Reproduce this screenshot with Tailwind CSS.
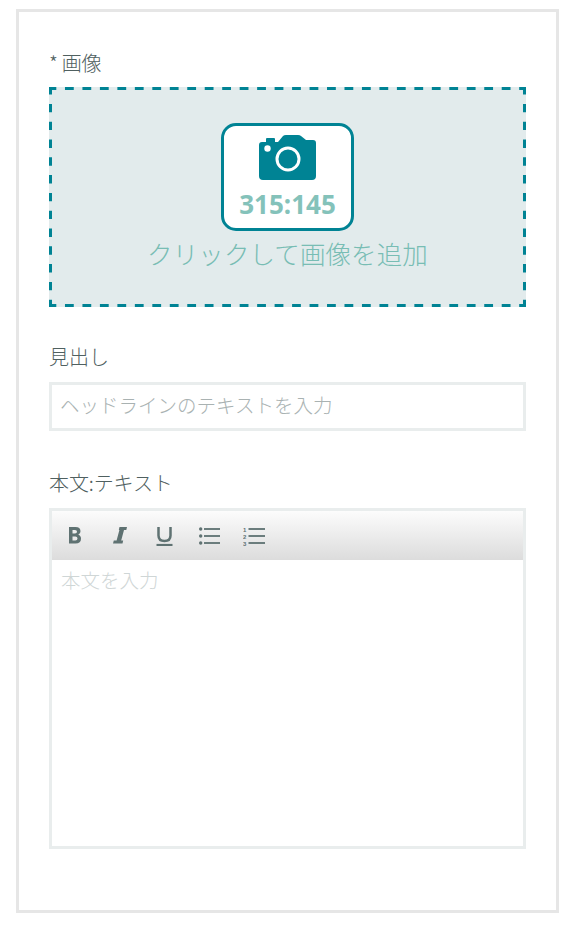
<!DOCTYPE html>
<html lang="ja">
<head>
<meta charset="utf-8">
<script src="https://cdn.jsdelivr.net/npm/@tailwindcss/browser@4"></script>
</head>
<body class="bg-white font-['Noto_Sans_CJK_JP','Noto_Sans',sans-serif] font-light text-[#4f6060]">
<div class="ml-4 mt-[9px] w-[543px] h-[904px] border-[3px] border-[#e6e6e6] pl-[30px] pr-[30px] pt-[37px]">
  <div class="h-[28px] flex items-center text-[20px] leading-[28px] tracking-[-0.3px]">* 画像</div>
  <div class="relative mt-[10px] h-[220px] bg-[#e2ebec] flex flex-col items-center pt-[36px]">
    <svg class="absolute inset-0" width="477" height="220" viewBox="0 0 477 220" fill="none" stroke="#008394" stroke-width="3">
      <path d="M0 1.5 H477 M0 218.5 H477" stroke-dasharray="8.8 8.67" stroke-dashoffset="1.5"/>
      <path d="M1.5 0 V220 M475.5 0 V220" stroke-dasharray="8.4 9.4" stroke-dashoffset="0.9"/>
    </svg>
    <div class="relative w-[133px] h-[108px] shrink-0 border-[3px] border-[#008394] rounded-[15px] bg-white flex flex-col items-center">
      <svg class="mt-[8px]" width="58" height="46" viewBox="0 0 58 46"><path fill="#008394" d="M3 8 H7 V5 Q7 4 8 4 H15 Q16 4 16 5 V8 H19 L24 2 Q25 1 27 1 H39 Q41 1 42 2 L47 6 H54 Q57 6 57 9 V42 Q57 46 53 46 H4 Q0 46 0 42 V11 Q0 8 3 8 Z"/><circle cx="8.5" cy="14.5" r="3.2" fill="#fff"/><circle cx="29" cy="25" r="11" fill="none" stroke="#fff" stroke-width="3"/></svg>
      <div class="font-['Noto_Sans'] font-bold text-[26px] leading-[30px] mt-[9px] text-[#84c2ba]">315:145</div>
    </div>
    <div class="relative text-[25.5px] leading-[32px] mt-[6px] tracking-[0.1px] text-[#78bdb4]">クリックして画像を追加</div>
  </div>
  <div class="mt-[36px] h-[28px] flex items-center text-[20px] leading-[28px]">見出し</div>
  <div class="mt-[11px] h-[49px] border-[3px] border-[#e9eded] pl-[8px] pb-[3px] flex items-center text-[19.5px] text-[#a9b2b2] bg-white whitespace-nowrap">ヘッドラインのテキストを入力</div>
  <div class="mt-[38px] h-[28px] flex items-center text-[20px] leading-[28px] tracking-[-0.1px]">本文:テキスト</div>
  <div class="mt-[11px] h-[341px] border-[3px] border-[#e9eded] bg-white">
    <div class="h-[49px] bg-linear-to-b from-[#fcfcfc] to-[#dcdcdc] flex items-center pl-[17px]">
      <svg width="12" height="20" viewBox="0 0 12 20"><path fill="#5f7272" fill-rule="evenodd" d="M0 1 H6.5 Q11.5 1 11.5 5.3 Q11.5 8 9.3 8.8 Q12 9.6 12 12.8 Q12 17.5 6.5 17.5 H0 Z M3.5 4 V7.6 H6 Q8 7.6 8 5.8 Q8 4 6 4 Z M3.5 10.4 V14.5 H6.3 Q8.5 14.5 8.5 12.4 Q8.5 10.4 6.3 10.4 Z"/></svg>
      <svg class="ml-[32px]" width="14" height="20" viewBox="0 0 14 20"><path fill="#5f7272" d="M6.5 1 H14 L13.3 4 H11 L8.2 14.5 H10.2 L9.5 17.5 H0 L0.8 14.5 H3.6 L6.4 4 H5.8 Z"/></svg>
      <svg class="ml-[29px]" width="17" height="20" viewBox="0 0 17 20"><path d="M2.5 1 V9.5 Q2.5 15 8.5 15 Q14.5 15 14.5 9.5 V1" fill="none" stroke="#5f7272" stroke-width="2.5"/><path d="M0.5 19 H16.5" stroke="#5f7272" stroke-width="2.2"/></svg>
      <svg class="ml-[26px]" width="21" height="20" viewBox="0 0 21 20"><g fill="#5f7272"><circle cx="1.7" cy="3" r="1.7"/><circle cx="1.7" cy="10" r="1.7"/><circle cx="1.7" cy="17" r="1.7"/></g><path d="M5 3 H21 M5 10 H21 M5 17 H21" stroke="#6b7d7d" stroke-width="2"/></svg>
      <svg class="ml-[23px]" width="22" height="20" viewBox="0 0 22 20"><g fill="#5f7272" font-family="Liberation Sans" font-size="6" font-weight="700"><text x="0" y="5.5">1</text><text x="0" y="12.5">2</text><text x="0" y="19.5">3</text></g><path d="M5.5 3 H22 M5.5 10 H22 M5.5 17 H22" stroke="#6b7d7d" stroke-width="2"/></svg>
    </div>
    <div class="pl-[9px] pt-[5px] text-[19.5px] leading-[30px] text-[#cfd6d6]">本文を入力</div>
  </div>
</div>
</body>
</html>
